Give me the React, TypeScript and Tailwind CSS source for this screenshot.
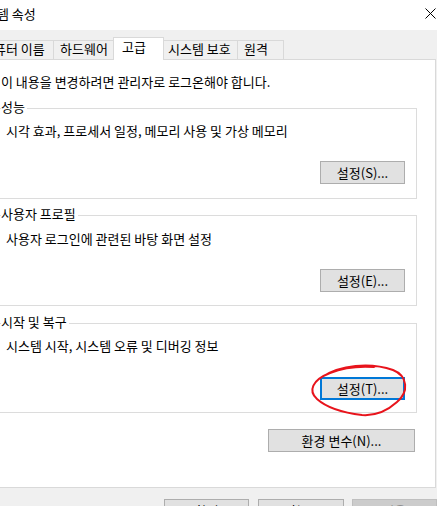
const tabBase =
  "flex items-center h-[19px] border-t border-r border-[#d9d9d9] bg-[#f0f0f0] leading-[16px]";
const btn =
  "flex items-center justify-center h-[23px] bg-[#e1e1e1] border border-[#adadad] text-[13px] leading-[16px]";

function GroupBox({
  title,
  text,
  button,
  height,
  textTop,
  btnTop,
  focused,
}: {
  title: string;
  text: string;
  button: string;
  height: string;
  textTop: string;
  btnTop: string;
  focused?: boolean;
}) {
  return (
    <div className={`relative ml-[-8px] w-[424px] border border-[#dcdcdc] ${height}`}>
      <span className="absolute left-[7px] top-[-10px] bg-white pr-[2px] leading-[16px]">{title}</span>
      <div className={`pl-[12px] leading-[16px] whitespace-nowrap ${textTop}`}>{text}</div>
      <div className={`flex justify-end pr-[11px] ${btnTop}`}>
        <button
          className={
            focused
              ? "flex items-center justify-center w-[85px] h-[23px] bg-[#e1e1e1] border-2 border-[#0078d7] text-[13px] leading-[16px]"
              : `${btn} w-[85px]`
          }
        >
          {button}
        </button>
      </div>
    </div>
  );
}

export default function App() {
  return (
    <div className="relative w-[437px] h-[506px] overflow-hidden bg-[#f0f0f0] text-black text-[13px] font-['Noto_Sans_CJK_KR','Noto_Sans',sans-serif]">
      {/* Title bar */}
      <div className="flex items-center justify-between h-[30px] bg-white">
        <span className="ml-[-27px] -mt-[3px] leading-[16px] whitespace-nowrap">시스템 속성</span>
        <svg width="11" height="11" viewBox="0 0 11 11" className="mr-[1px] -mt-[4px]">
          <path d="M0.5 0.5 L10.5 10.5 M10.5 0.5 L0.5 10.5" stroke="#000" strokeWidth="1" />
        </svg>
      </div>

      {/* Tabs */}
      <div className="flex items-end h-[29px] ml-[-22px] whitespace-nowrap">
        <div className={`${tabBase} w-[76px] border-l pl-[3px] pb-[2px]`}>컴퓨터 이름</div>
        <div className={`${tabBase} w-[60px] pl-[6px] pb-[2px]`}>하드웨어</div>
        <div className="relative z-10 -ml-px mb-[-1px] flex items-center h-[23px] w-[51px] border-t border-l border-r border-[#d9d9d9] bg-white pl-[8px] pb-[4px] leading-[16px]">
          고급
        </div>
        <div className={`${tabBase} w-[74px] pl-[4px] pb-[2px]`}>시스템 보호</div>
        <div className={`${tabBase} w-[46px] pl-[6px] pb-[2px]`}>원격</div>
      </div>

      {/* Panel */}
      <div className="-ml-px w-[437px] h-[429px] border border-[#d9d9d9] bg-white pl-px">
        <div className="mt-[14px] leading-[16px] whitespace-nowrap">
          이 내용을 변경하려면 관리자로 로그온해야 합니다.
        </div>

        <div className="mt-[18px]">
          <GroupBox
            title="성능"
            text="시각 효과, 프로세서 일정, 메모리 사용 및 가상 메모리"
            button="설정(S)..."
            height="h-[91px]"
            textTop="pt-[14px]"
            btnTop="mt-[22px]"
          />
        </div>
        <div className="mt-[16px]">
          <GroupBox
            title="사용자 프로필"
            text="사용자 로그인에 관련된 바탕 화면 설정"
            button="설정(E)..."
            height="h-[91px]"
            textTop="pt-[15px]"
            btnTop="mt-[22px]"
          />
        </div>
        <div className="mt-[17px]">
          <GroupBox
            title="시작 및 복구"
            text="시스템 시작, 시스템 오류 및 디버깅 정보"
            button="설정(T)..."
            height="h-[90px]"
            textTop="pt-[14px]"
            btnTop="mt-[23px]"
            focused
          />
        </div>

        <div className="flex justify-end pr-[20px] mt-[16px]">
          <button className={`${btn} w-[147px]`}>환경 변수(N)...</button>
        </div>
      </div>

      {/* Bottom buttons */}
      <div className="flex mt-[11px] ml-[164px]">
        <button className={`${btn} w-[86px]`}>확인</button>
        <button className={`${btn} w-[86px] ml-[9px]`}>취소</button>
        <button className="flex items-center justify-center h-[23px] w-[86px] ml-[8px] bg-[#cccccc] border border-[#bfbfbf] text-[#838383] text-[13px] leading-[16px]">
          적용
        </button>
      </div>

      {/* Red hand-drawn circle annotation */}
      <svg className="absolute inset-0 pointer-events-none" width="437" height="506">
        <path
          d="M322 377 C340 365, 370 362, 393 370 C408 376, 409 392, 397 402 C387 411, 375 416, 362 415 C345 413, 327 408, 317 399 C308 391, 312 380, 330 373 C345 367, 360 366, 374 367"
          fill="none"
          stroke="#e8141c"
          strokeWidth="2"
          strokeLinecap="round"
        />
      </svg>
    </div>
  );
}
